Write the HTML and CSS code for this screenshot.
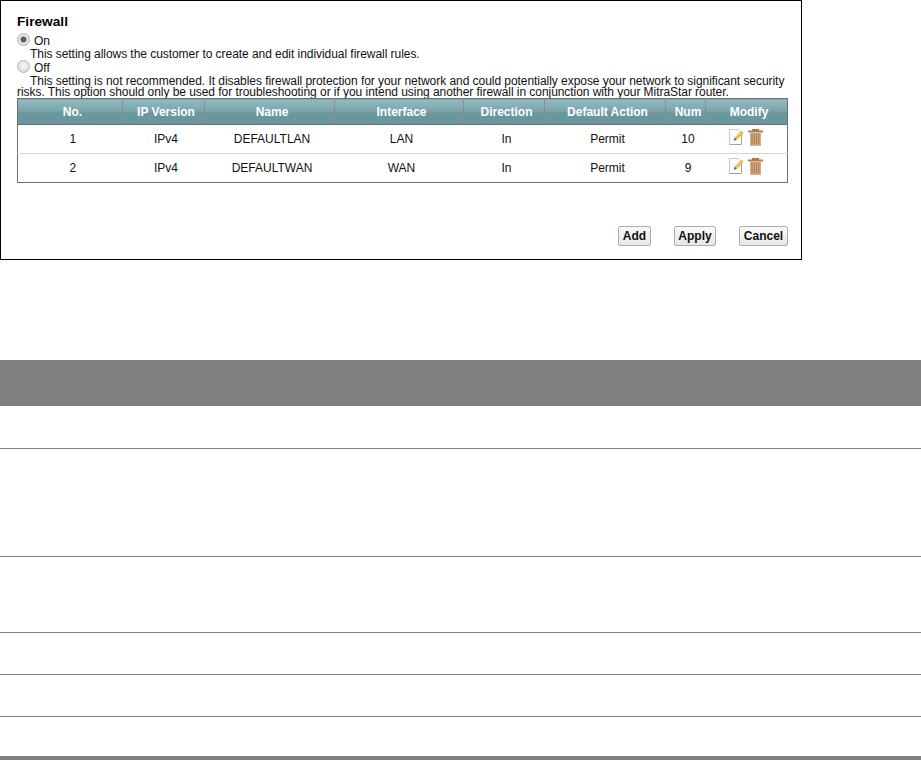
FILE: index.html
```html
<!DOCTYPE html>
<html lang="en">
<head>
<meta charset="utf-8">
<title>Firewall</title>
<link rel="stylesheet" href="styles.css">
</head>
<body>
<section class="frame">
  <h1 class="title">Firewall</h1>
  <label class="radio-row"><input class="radio" type="radio" name="fw" checked><span>On</span></label>
  <p class="desc">This setting allows the customer to create and edit individual firewall rules.</p>
  <label class="radio-row"><input class="radio" type="radio" name="fw"><span>Off</span></label>
  <p class="desc">This setting is not recommended. It disables firewall protection for your network and could potentially expose your network to significant security risks. This option should only be used for troubleshooting or if you intend using another firewall in conjunction with your MitraStar router.</p>
  <table class="rules">
    <thead>
      <tr><th class="c1">No.</th><th class="c2">IP Version</th><th class="c3">Name</th><th class="c4">Interface</th><th class="c5">Direction</th><th class="c6">Default Action</th><th class="c7">Num</th><th class="c8">Modify</th></tr>
    </thead>
    <tbody>
      <tr><td>1</td><td>IPv4</td><td>DEFAULTLAN</td><td>LAN</td><td>In</td><td>Permit</td><td>10</td>
        <td class="modify"><span class="icons">
          <svg width="16" height="16" viewBox="0 0 16 16"><path d="M.5 .5h8.500l3.500 3.500v11.500h-12z" fill="#fdfdfd" stroke="#c8c8c8"/><path d="M12.500 6v9.500h-12" fill="none" stroke="#a4a4a4"/><path d="M5 11.500l.8-2.700 6.700-6.800 1.900 1.900-6.700 6.800z" fill="#f4c040" stroke="#c9922a" stroke-width=".4"/><path d="M5 11.500l.8-2.700 1.900 1.900z" fill="#6a5b48"/></svg>
          <svg width="15" height="17" viewBox="0 0 15 17"><path d="M4 0h7v1.500h4v2h-15v-2h4z" fill="#b07a4e"/><path d="M2 4h11v13h-11z" fill="#d3ae8c"/><path d="M4 4.500v11M6.300 4.500v11M8.700 4.500v11M11 4.500v11" stroke="#a87448" stroke-width="1"/></svg>
        </span></td></tr>
      <tr><td>2</td><td>IPv4</td><td>DEFAULTWAN</td><td>WAN</td><td>In</td><td>Permit</td><td>9</td>
        <td class="modify"><span class="icons">
          <svg width="16" height="16" viewBox="0 0 16 16"><path d="M.5 .5h8.500l3.500 3.500v11.500h-12z" fill="#fdfdfd" stroke="#c8c8c8"/><path d="M12.500 6v9.500h-12" fill="none" stroke="#a4a4a4"/><path d="M5 11.500l.8-2.700 6.700-6.800 1.900 1.900-6.700 6.800z" fill="#f4c040" stroke="#c9922a" stroke-width=".4"/><path d="M5 11.500l.8-2.700 1.900 1.900z" fill="#6a5b48"/></svg>
          <svg width="15" height="17" viewBox="0 0 15 17"><path d="M4 0h7v1.500h4v2h-15v-2h4z" fill="#b07a4e"/><path d="M2 4h11v13h-11z" fill="#d3ae8c"/><path d="M4 4.500v11M6.300 4.500v11M8.700 4.500v11M11 4.500v11" stroke="#a87448" stroke-width="1"/></svg>
        </span></td></tr>
    </tbody>
  </table>
  <div class="actions">
    <button class="btn add" type="button">Add</button>
    <button class="btn apply" type="button">Apply</button>
    <button class="btn cancel" type="button">Cancel</button>
  </div>
</section>
<section class="lower">
  <div class="lower-head"></div>
  <div class="lower-row h1"></div>
  <div class="lower-row h2"></div>
  <div class="lower-row h3"></div>
  <div class="lower-row h4"></div>
  <div class="lower-row h5"></div>
  <div class="lower-end"></div>
</section>
</body>
</html>
```
FILE: styles.css
```css
* { box-sizing: border-box; }
html, body { margin: 0; padding: 0; background: #fff; }
body { width: 921px; height: 760px; overflow: hidden; font-family: "Liberation Sans", Arial, sans-serif; font-size: 12px; color: #111; }

.frame { width: 802px; height: 260px; border: 1px solid #000; padding: 13px 14px 0 16px; display: flex; flex-direction: column; align-items: flex-start; margin-bottom: 100px; }
.title { margin: 0 0 4px; font-size: 13.7px; line-height: 15px; font-weight: bold; color: #000; }
.radio-row { display: flex; align-items: flex-start; height: 16px; line-height: 13px; }
.radio-row span { margin: 2px 0 0 4px; }
.radio { appearance: none; -webkit-appearance: none; width: 13px; height: 13px; margin: 0; border: 1px solid #b4b4b4; border-radius: 50%; background: radial-gradient(circle at 50% 40%, #f6f6f6, #d2d2d2); }
.radio:checked { background: radial-gradient(circle, #5f5f5f 0 2.6px, #e6e6e6 3.4px, #dcdcdc 100%); }
.desc { margin: 0; width: 770px; font-size: 12px; line-height: 11px; text-indent: 13px; letter-spacing: -0.05px; }

.rules { width: 770px; border-collapse: collapse; table-layout: fixed; border: 1px solid #6f6f6f; font-size: 12px; }
.rules th { height: 26px; padding: 0 0 0 5px; color: #fff; font-weight: bold; text-align: center; background: linear-gradient(#93bcc0, #7ba6ac 45%, #6a969e 55%, #6a969e); border-right: 1px solid #8d8d8d; border-bottom: 1px solid #6f6f6f; }
.rules th:last-child { border-right: 0; }
.rules td { height: 29px; padding: 0 0 1px 5px; text-align: center; border-bottom: 1px solid #d4d4d4; }
.rules tr:last-child td { border-bottom: 0; }
.rules td.modify { padding: 0; }
.c1 { width: 105px; } .c2 { width: 82px; } .c3 { width: 130px; } .c4 { width: 129px; }
.c5 { width: 81px; } .c6 { width: 121px; } .c7 { width: 40px; } .c8 { width: 82px; }
.icons { display: inline-flex; align-items: flex-start; gap: 3px; vertical-align: middle; margin: -3px 0 0 -1px; }
.icons svg { display: block; }

.actions { display: flex; width: 771px; justify-content: flex-end; gap: 23px; margin-top: 43px; }
.btn { height: 20px; padding: 0; font: bold 12px "Liberation Sans", Arial, sans-serif; color: #111; background: linear-gradient(#fafafa, #e6e6e6); border: 1px solid #adadad; border-radius: 2px; }
.add { width: 33px; } .apply { width: 42px; } .cancel { width: 49px; }

.lower { display: flex; flex-direction: column; width: 921px; }
.lower-head { height: 46px; background: #808080; }
.lower-row { border-bottom: 1px solid #808080; }
.h1 { height: 43px; } .h2 { height: 108px; } .h3 { height: 76px; } .h4 { height: 42px; } .h5 { height: 42px; }
.lower-end { height: 4px; margin-top: 39px; background: #808080; }
```
